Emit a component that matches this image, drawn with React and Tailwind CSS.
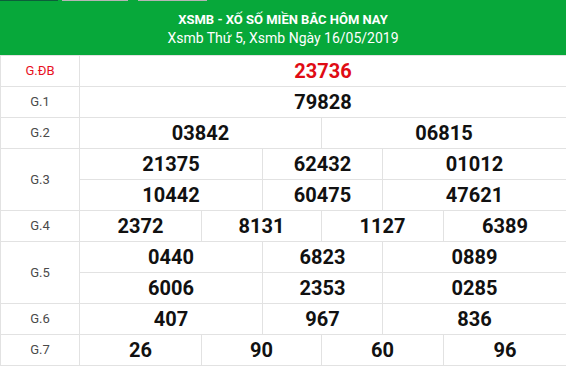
const rows = [
  { label: "G.ĐB", red: true, lines: [{ cols: [486], nums: ["23736"] }] },
  { label: "G.1", lines: [{ cols: [486], nums: ["79828"] }] },
  { label: "G.2", lines: [{ cols: [242, 244], nums: ["03842", "06815"] }] },
  {
    label: "G.3",
    lines: [
      { cols: [183, 120, 183], nums: ["21375", "62432", "01012"] },
      { cols: [183, 120, 183], nums: ["10442", "60475", "47621"] },
    ],
  },
  { label: "G.4", lines: [{ cols: [122, 120, 122, 122], nums: ["2372", "8131", "1127", "6389"] }] },
  {
    label: "G.5",
    lines: [
      { cols: [183, 120, 183], nums: ["0440", "6823", "0889"] },
      { cols: [183, 120, 183], nums: ["6006", "2353", "0285"] },
    ],
  },
  { label: "G.6", lines: [{ cols: [183, 120, 183], nums: ["407", "967", "836"] }] },
  { label: "G.7", lines: [{ cols: [122, 120, 122, 122], nums: ["26", "90", "60", "96"] }] },
];

function Prize({ row }) {
  return (
    <div className="flex">
      <div
        className={`w-[80px] shrink-0 flex items-center justify-center border-l border-r border-b border-[#e2e2e2] text-[13px] ${
          row.red ? "text-[#e8101e]" : "text-[#4a4a4a]"
        }`}
      >
        {row.label}
      </div>
      <div className="flex-1 flex flex-col">
        {row.lines.map((line, i) => (
          <div key={i} className="flex h-[31px] border-b border-[#e2e2e2]">
            {line.nums.map((n, j) => (
              <div
                key={j}
                style={{ width: line.cols[j] }}
                className={`flex items-center justify-center text-[20px] font-bold ${
                  j < line.nums.length - 1 ? "border-r border-[#e2e2e2]" : ""
                } ${row.red ? "text-[#e00b14]" : "text-[#111]"}`}
              >
                {n}
              </div>
            ))}
          </div>
        ))}
      </div>
    </div>
  );
}

export default function App() {
  return (
    <div className="w-[566px] h-[366px] bg-white overflow-hidden" style={{ fontFamily: "Roboto, 'Liberation Sans', sans-serif" }}>
      <div className="h-[55px] bg-[#07a83a] text-white text-center">
        <div className="flex h-px">
          <div className="w-[58px] bg-[#0c5f3a]" />
          <div className="w-[4px]" />
          <div className="w-[66px] bg-[#b5b5b5]" />
          <div className="w-[10px]" />
          <div className="w-[69px] bg-[#b5b5b5]" />
        </div>
        <div className="pt-[10px] text-[13px] font-bold leading-[18px]">XSMB - XỐ SỐ MIỀN BẮC HÔM NAY</div>
        <div className="text-[14px] leading-[18px]">Xsmb Thứ 5, Xsmb Ngày 16/05/2019</div>
      </div>
      <div className="border-t border-[#e2e2e2]">
        {rows.map((r) => (
          <Prize key={r.label} row={r} />
        ))}
      </div>
    </div>
  );
}
